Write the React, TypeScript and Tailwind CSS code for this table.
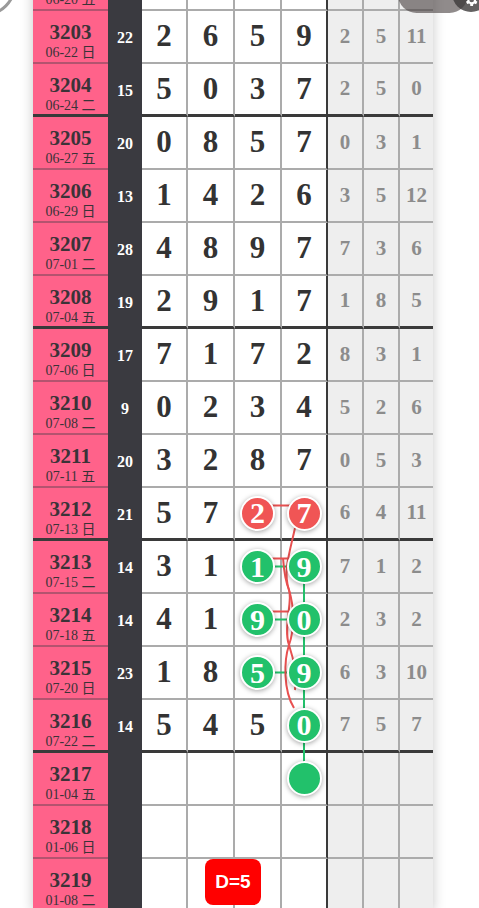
import React from "react";

type Mark = "red" | "green" | "empty";

type Row = {
  no: number;
  date: string;
  sum?: number;
  digits: (number | null)[];
  stats: (number | null)[];
  marks?: Record<number, Mark>;
};

const rows: Row[] = [
  { no: 3202, date: "06-20 五", sum: 18, digits: [4, 3, 8, 3], stats: [1, 5, 4] },
  { no: 3203, date: "06-22 日", sum: 22, digits: [2, 6, 5, 9], stats: [2, 5, 11] },
  { no: 3204, date: "06-24 二", sum: 15, digits: [5, 0, 3, 7], stats: [2, 5, 0] },
  { no: 3205, date: "06-27 五", sum: 20, digits: [0, 8, 5, 7], stats: [0, 3, 1] },
  { no: 3206, date: "06-29 日", sum: 13, digits: [1, 4, 2, 6], stats: [3, 5, 12] },
  { no: 3207, date: "07-01 二", sum: 28, digits: [4, 8, 9, 7], stats: [7, 3, 6] },
  { no: 3208, date: "07-04 五", sum: 19, digits: [2, 9, 1, 7], stats: [1, 8, 5] },
  { no: 3209, date: "07-06 日", sum: 17, digits: [7, 1, 7, 2], stats: [8, 3, 1] },
  { no: 3210, date: "07-08 二", sum: 9, digits: [0, 2, 3, 4], stats: [5, 2, 6] },
  { no: 3211, date: "07-11 五", sum: 20, digits: [3, 2, 8, 7], stats: [0, 5, 3] },
  { no: 3212, date: "07-13 日", sum: 21, digits: [5, 7, 2, 7], stats: [6, 4, 11], marks: { 2: "red", 3: "red" } },
  { no: 3213, date: "07-15 二", sum: 14, digits: [3, 1, 1, 9], stats: [7, 1, 2], marks: { 2: "green", 3: "green" } },
  { no: 3214, date: "07-18 五", sum: 14, digits: [4, 1, 9, 0], stats: [2, 3, 2], marks: { 2: "green", 3: "green" } },
  { no: 3215, date: "07-20 日", sum: 23, digits: [1, 8, 5, 9], stats: [6, 3, 10], marks: { 2: "green", 3: "green" } },
  { no: 3216, date: "07-22 二", sum: 14, digits: [5, 4, 5, 0], stats: [7, 5, 7], marks: { 3: "green" } },
  { no: 3217, date: "01-04 五", digits: [null, null, null, null], stats: [null, null, null], marks: { 3: "empty" } },
  { no: 3218, date: "01-06 日", digits: [null, null, null, null], stats: [null, null, null] },
  { no: 3219, date: "01-08 二", digits: [null, null, null, null], stats: [null, null, null] },
];

const digitWidths = ["w-[46px]", "w-[47px]", "w-[47px]", "w-[46px]"];
const statWidths = ["w-[36px]", "w-[36px]", "w-[33px]"];

function Ball({ value, mark }: { value: number | null; mark: Mark }) {
  const bg = mark === "red" ? "bg-[#f05555]" : "bg-[#22c16b]";
  return (
    <div
      className={`relative z-10 flex h-[35px] w-[35px] items-center justify-center rounded-full border-2 border-white ${bg} text-[30px] font-bold leading-none text-white shadow-[0_1px_5px_rgba(0,0,0,0.35)]`}
    >
      {mark === "empty" ? "" : value}
    </div>
  );
}

function TableRow({ row }: { row: Row }) {
  const thick = row.no % 4 === 0;
  const bottom = thick ? "border-b-[3px] border-b-[#3a3a3a]" : "border-b-2 border-b-[#ababab]";
  const pinkBottom = thick ? "border-b-[3px] border-b-[#3a3a3a]" : "border-b-2 border-b-[#b4536f]";

  return (
    <div className="flex h-[53px]">
      {/* issue no + date */}
      <div className={`flex w-[75px] flex-col items-center justify-center pt-[10px] bg-[#ff628a] text-[#3b3338] ${pinkBottom}`}>
        <div className="text-[21px] font-bold leading-[22px]">{row.no}</div>
        <div className="text-[14px] leading-[19px]">{row.date}</div>
      </div>

      {/* sum */}
      <div className="flex w-[34px] items-center justify-center bg-[#3a3a40] text-[16px] font-bold text-white">
        {row.sum}
      </div>

      {/* digits */}
      {row.digits.map((d, i) => {
        const mark = row.marks?.[i];
        const right = i === 3 ? "border-r-2 border-r-[#3a3a3a]" : "border-r-2 border-r-[#ababab]";
        return (
          <div
            key={i}
            className={`flex ${digitWidths[i]} items-center justify-center bg-white text-[31px] font-bold text-[#333] ${bottom} ${right}`}
          >
            {mark ? <Ball value={d} mark={mark} /> : d}
          </div>
        );
      })}

      {/* stats */}
      {row.stats.map((s, i) => (
        <div
          key={i}
          className={`flex ${statWidths[i]} items-center justify-center bg-[#eeeeee] text-[21px] font-bold text-[#8c8c8c] ${bottom} ${
            i < 2 ? "border-r-2 border-r-[#ababab]" : ""
          }`}
        >
          {s}
        </div>
      ))}
    </div>
  );
}

export default function App() {
  return (
    <div className="relative h-[908px] overflow-hidden bg-white font-['Liberation_Serif','Noto_Sans_CJK_SC',serif]">
      <div className="ml-[33px] -mt-[42px] w-[400px] shadow-[0_0_12px_rgba(0,0,0,0.22)]">
        {rows.map((r) => (
          <TableRow key={r.no} row={r} />
        ))}
      </div>

      {/* trend lines */}
      <svg className="pointer-events-none absolute left-0 top-0 z-[5]" width="479" height="908" fill="none">
        <line x1="258" y1="505.5" x2="304" y2="505.5" stroke="#e85050" strokeWidth="2" />
        <line x1="258" y1="558.5" x2="304" y2="558.5" stroke="#e85050" strokeWidth="2" />
        <line x1="258" y1="611.5" x2="304" y2="611.5" stroke="#e85050" strokeWidth="2" />
        <line x1="258" y1="566.5" x2="304" y2="566.5" stroke="#22c16b" strokeWidth="2" />
        <line x1="258" y1="619.5" x2="304" y2="619.5" stroke="#22c16b" strokeWidth="2" />
        <line x1="258" y1="672.5" x2="304" y2="672.5" stroke="#22c16b" strokeWidth="2" />
        <line x1="304" y1="566.5" x2="304" y2="778.5" stroke="#22c16b" strokeWidth="2" />
        <path d="M295,528 C289,555 283,572 289,590 C294,606 295,628 289,645 C284,660 283,690 294,708" stroke="#e85050" strokeWidth="2" />
        <path d="M283,558 C284,572 285,580 289,590 C293,600 283,628 289,645 C294,660 297,675 295,690" stroke="#e85050" strokeWidth="2" />
      </svg>

      {/* D value badge */}
      <div className="absolute left-[205px] top-[859px] z-20 flex h-[46px] w-[56px] items-center justify-center rounded-lg bg-[#ff0000] font-['Liberation_Sans',sans-serif] text-[19px] font-bold text-white">
        D=5
      </div>

      {/* floating controls, cut off by the top edge */}
      <div className="absolute left-[-46px] top-[-46px] z-20 h-[62px] w-[62px] rounded-full border-[3px] border-[#9a9a9a] bg-white/60" />
      <div className="absolute left-[398px] top-[-24px] z-20 flex h-[37px] w-[70px] items-end rounded-full bg-[rgba(70,62,62,0.6)] pb-[11px] pl-[10px] font-['Liberation_Sans',sans-serif] text-[11px] font-bold leading-none text-white">
        1/1
      </div>
      <div className="absolute left-[452px] top-[-26px] z-20 flex h-[38px] w-[38px] items-end justify-center rounded-full bg-[rgba(60,58,58,0.8)] pb-[4px]">
        <svg width="16" height="16" viewBox="0 0 24 24" fill="white">
          <path d="M19.4 13a7.5 7.5 0 0 0 0-2l2.1-1.6-2-3.5-2.5 1a7.6 7.6 0 0 0-1.7-1L15 3h-4l-.4 2.7a7.6 7.6 0 0 0-1.7 1l-2.5-1-2 3.5L6.6 11a7.5 7.5 0 0 0 0 2l-2.1 1.6 2 3.5 2.5-1a7.6 7.6 0 0 0 1.7 1L11 21h4l.4-2.7a7.6 7.6 0 0 0 1.7-1l2.5 1 2-3.5zM13 15.5a3.5 3.5 0 1 1 0-7 3.5 3.5 0 0 1 0 7z" />
        </svg>
      </div>
    </div>
  );
}
